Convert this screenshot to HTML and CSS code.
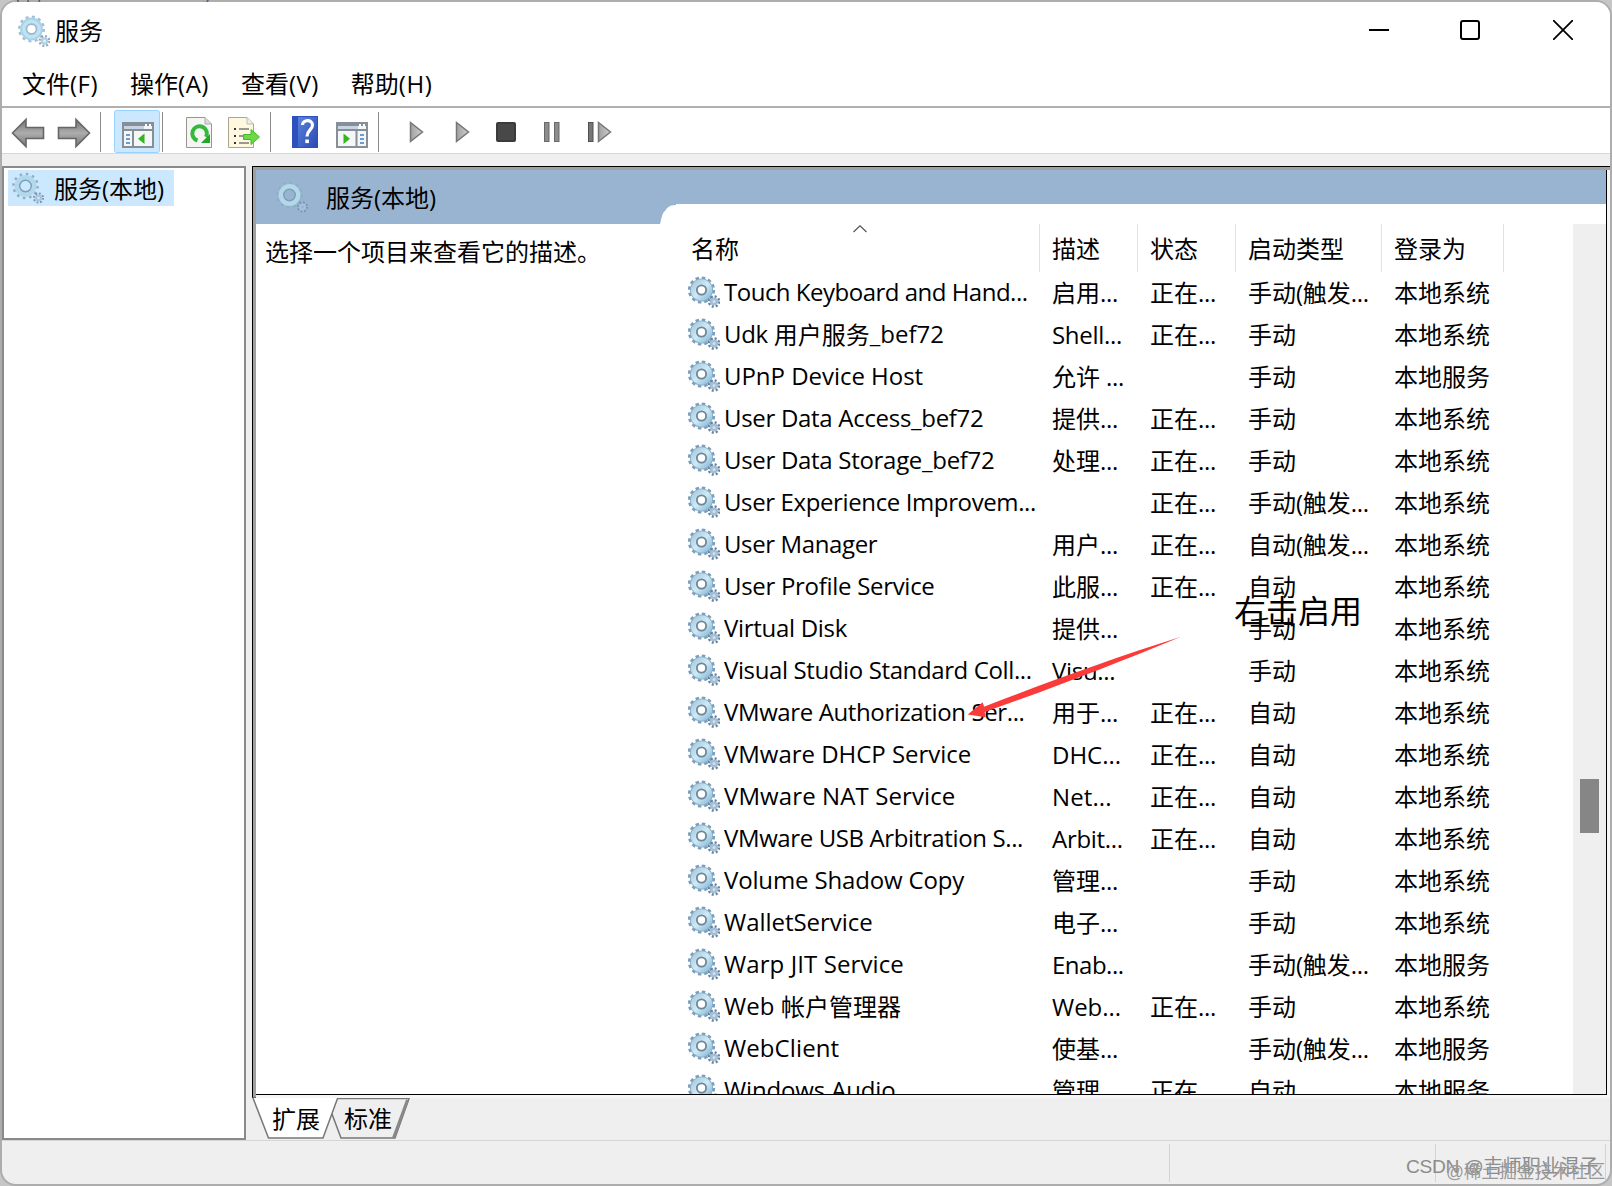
FILE: index.html
```html
<!DOCTYPE html>
<html lang="zh-CN">
<head>
<meta charset="utf-8">
<title>服务</title>
<link rel="stylesheet" href="styles.css">
</head>
<body>
<svg class="defs" width="0" height="0">
  <defs>
    <linearGradient id="ring" x1="0" y1="0" x2="1" y2="1"><stop offset="0" stop-color="#a9cce0"/><stop offset=".5" stop-color="#cfeaf5"/><stop offset="1" stop-color="#8fc0dc"/></linearGradient>
    <linearGradient id="metal" x1="0" y1="0" x2="0" y2="1"><stop offset="0" stop-color="#707070"/><stop offset=".5" stop-color="#adadad"/><stop offset="1" stop-color="#777"/></linearGradient>
    <linearGradient id="play" x1="0" y1="0" x2="1" y2="0"><stop offset="0" stop-color="#a0a0a0"/><stop offset="1" stop-color="#cfcfcf"/></linearGradient>
    <linearGradient id="book" x1="0" y1="0" x2="1" y2="1"><stop offset="0" stop-color="#5a83dd"/><stop offset="1" stop-color="#2a49b4"/></linearGradient>
    <symbol id="gear" viewBox="0 0 32 32">
      <circle cx="13.5" cy="14" r="12" fill="none" stroke="#7b9db9" stroke-width="3.2" stroke-dasharray="3.4 2.88"/>
      <circle cx="13.5" cy="14" r="8.2" fill="none" stroke="#86abc6" stroke-width="6.6"/>
      <circle cx="13.5" cy="14" r="8" fill="none" stroke="url(#ring)" stroke-width="5.4"/>
      <circle cx="13.5" cy="14" r="4.6" fill="#fff" stroke="#6f8799" stroke-width="1.8"/>
      <circle cx="26" cy="25.500" r="5" fill="none" stroke="#68829d" stroke-width="2.600" stroke-dasharray="2 1.930"/>
      <circle cx="26" cy="25.500" r="2.800" fill="#cfe0ee" stroke="#a3bfd6" stroke-width="2.600"/>
    </symbol>
    <symbol id="gear-title" viewBox="0 0 32 32">
      <circle cx="13.500" cy="14" r="12" fill="none" stroke="#a5c0d2" stroke-width="3" stroke-dasharray="3 3.280"/>
      <circle cx="13.500" cy="14" r="8.200" fill="none" stroke="#a9d3ea" stroke-width="6.400"/>
      <circle cx="13.500" cy="14" r="7.800" fill="none" stroke="#c1e2f2" stroke-width="3"/>
      <circle cx="13.500" cy="14" r="4.800" fill="#fff" stroke="#9fb6c6" stroke-width="1.400"/>
      <circle cx="26.500" cy="26" r="4.800" fill="none" stroke="#8fa9bd" stroke-width="2.400" stroke-dasharray="1.900 1.870"/>
      <circle cx="26.500" cy="26" r="2.600" fill="#e3eff6" stroke="#b2d0e2" stroke-width="2.200"/>
    </symbol>
    <symbol id="gear-soft" viewBox="0 0 32 32">
      <circle cx="13.500" cy="14" r="12" fill="none" stroke="#8fadc4" stroke-width="2.600" stroke-dasharray="2.500 3.780"/>
      <circle cx="13.500" cy="14" r="8.400" fill="none" stroke="#b3d8ea" stroke-width="5"/>
      <circle cx="13.500" cy="14" r="5.800" fill="none" stroke="#7d9eb8" stroke-width="1.400"/>
      <circle cx="26.500" cy="26" r="4.600" fill="none" stroke="#7a95ae" stroke-width="2" stroke-dasharray="1.800 1.810"/>
      <circle cx="26.500" cy="26" r="2.400" fill="none" stroke="#a7c3d8" stroke-width="2"/>
    </symbol>
  </defs>
</svg>
<div class="desktop">
<div class="window">
  <header class="titlebar">
    <svg class="gear-icon" width="32" height="32"><use href="#gear-title"/></svg>
    <h1 class="title">服务</h1>
    <div class="controls">
      <svg width="20" height="20"><path d="M0 10h20" stroke="#000" stroke-width="2"/></svg>
      <svg width="20" height="20"><rect x="1" y="1" width="18" height="18" rx="2" fill="none" stroke="#000" stroke-width="2"/></svg>
      <svg width="20" height="20"><path d="M0 0L20 20M20 0L0 20" stroke="#000" stroke-width="1.8"/></svg>
    </div>
  </header>
  <nav class="menu"><span>文件<i>(F)</i></span><span>操作<i>(A)</i></span><span>查看<i>(V)</i></span><span>帮助<i>(H)</i></span></nav>
  <div class="toolbar">
    <svg width="378" height="45" viewBox="2 108 378 45">
      <path d="M12.500 133L26 119.500V127.500H43.500V138.500H26V146.500Z" fill="url(#metal)" stroke="#666" stroke-width="1.600"/>
      <path d="M89.500 133L76 119.500V127.500H58.500V138.500H76V146.500Z" fill="url(#metal)" stroke="#666" stroke-width="1.600"/>
      <path d="M100.500 112V152M162.500 112V152M270.500 112V152M378.500 112V152" stroke="#8c8c8c"/>
      <rect x="114.500" y="110.500" width="45" height="42" rx="2" fill="#cce8ff" stroke="#99d1ff"/>
      <rect x="123" y="123" width="30" height="24" fill="#f4f6f8" stroke="#868e98" stroke-width="2"/>
      <path d="M122 125H154M122 130H154" stroke="#868e98" stroke-width="2"/><path d="M124 127.500H144" stroke="#c7d4e3" stroke-width="3"/><path d="M145 125h2M149 125h2" stroke="#fff" stroke-width="2"/>
      <path d="M133 131V146" stroke="#868e98" stroke-width="2"/><path d="M126 135h4M126 139h4M126 143h4" stroke="#3d80bd" stroke-width="1.600"/><path d="M144.500 133.500V144L138 138.800Z" fill="#32b51d"/>
      <path d="M186.500 117.500H205L211.500 124V147.500H186.500Z" fill="#f5f5f3" stroke="#96968e"/><path d="M205 117.500V124H211" fill="#ddd" stroke="#aaa"/>
      <path d="M197.500 140.500A7.300 7.300 0 1 1 206 137" fill="none" stroke="#35b83d" stroke-width="4"/><path d="M201 143L210 143V134Z" fill="#25a52c"/>
      <path d="M228.500 117.500H247L253.500 124V147.500H228.500Z" fill="#fdf8df" stroke="#a9a58f"/><path d="M247 117.500V124H253" fill="#eee" stroke="#bbb"/>
      <path d="M234 129h2M234 136h2M234 143h2" stroke="#333" stroke-width="2"/><path d="M239 129H249M239 136H246M239 143H249" stroke="#777" stroke-width="1.500"/>
      <path d="M243.500 134.500H251V129.500L259.500 137L251 144.500V139.500H243.500Z" fill="#6bd944" stroke="#44ba2c"/>
      <rect x="292" y="116" width="26" height="32" fill="#2e50bc"/><rect x="298" y="117" width="19" height="30" fill="url(#book)"/>
      <path d="M302.500 125C302.500 119.500 312.500 119 312.500 125C312.500 130 307 130 307 136.500" fill="none" stroke="#fff" stroke-width="3.200"/><rect x="305.300" y="139.500" width="3.600" height="3.600" fill="#fff"/>
      <rect x="337" y="123" width="30" height="24" fill="#f4f6f8" stroke="#868e98" stroke-width="2"/><path d="M336 125H368M336 130H368" stroke="#868e98" stroke-width="2"/><path d="M338 127.500H358" stroke="#c7d4e3" stroke-width="3"/><path d="M359 125h2M363 125h2" stroke="#fff" stroke-width="2"/>
      <path d="M356.500 131V146" stroke="#868e98" stroke-width="2"/><path d="M360 135h4M360 139h4M360 143h4" stroke="#3d80bd" stroke-width="1.600"/><path d="M343.500 133.500V144L350 138.800Z" fill="#32b51d"/>
    </svg>
    <svg class="run" width="204" height="24" viewBox="408 120 204 24">
      <path d="M410.500 122.500V141.500L422.500 132Z" fill="url(#play)" stroke="#777" stroke-width="1.500"/>
      <path d="M456.500 122.500V141.500L468.500 132Z" fill="url(#play)" stroke="#777" stroke-width="1.500"/>
      <rect x="497" y="123" width="18" height="18" rx="1" fill="#484848" stroke="#3b3b3b" stroke-width="2"/>
      <rect x="544.500" y="122.500" width="4.500" height="19" fill="#8c8c8c" stroke="#686868"/><rect x="554.500" y="122.500" width="4.500" height="19" fill="#8c8c8c" stroke="#686868"/>
      <rect x="588.500" y="122.500" width="4.500" height="19" fill="#777" stroke="#505050"/><path d="M598.500 122.500V141.500L610.500 132Z" fill="url(#play)" stroke="#777" stroke-width="1.500"/>
    </svg>
  </div>
  <main class="body">
    <aside class="tree"><div class="tree-item"><svg width="32" height="32"><use href="#gear-soft"/></svg><span>服务<i>(</i>本地<i>)</i></span></div></aside>
    <section class="pane">
      <div class="frame">
        <div class="content">
          <div class="info">
            <h2 class="band"><svg width="32" height="32"><use href="#gear-soft"/></svg><span>服务<i>(</i>本地<i>)</i></span></h2>
            <p class="hint">选择一个项目来查看它的描述。</p>
          </div>
          <div class="list">
            <div class="strip"></div>
            <div class="crest"><svg width="16" height="20"><path d="M0 0H16V1C9 1 7 4 5 7C2 9 2 13 0 20Z" fill="#99b4d1"/></svg></div>
            <div class="scroller">
              <div class="grid">
                <div class="row head"><span>名称<svg class="sort" width="14" height="8"><path d="M.5 7L7 .8L13.500 7" fill="none" stroke="#555" stroke-width="1.200"/></svg></span><span>描述</span><span>状态</span><span>启动类型</span><span>登录为</span></div>
                <div class="row"><b><svg><use href="#gear"/></svg><i class="tighter">Touch Keyboard and Hand...</i></b><span>启用<i>...</i></span><span>正在<i>...</i></span><span>手动<i>(</i>触发<i>...</i></span><span>本地系统</span></div>
                <div class="row"><b><svg><use href="#gear"/></svg><i>Udk </i>用户服务<i class="loose">_bef72</i></b><span><i>Shell...</i></span><span>正在<i>...</i></span><span>手动</span><span>本地系统</span></div>
                <div class="row"><b><svg><use href="#gear"/></svg><i class="loose">UPnP Device Host</i></b><span>允许<i> ...</i></span><span></span><span>手动</span><span>本地服务</span></div>
                <div class="row"><b><svg><use href="#gear"/></svg><i>User Data Access_bef72</i></b><span>提供<i>...</i></span><span>正在<i>...</i></span><span>手动</span><span>本地系统</span></div>
                <div class="row"><b><svg><use href="#gear"/></svg><i>User Data Storage_bef72</i></b><span>处理<i>...</i></span><span>正在<i>...</i></span><span>手动</span><span>本地系统</span></div>
                <div class="row"><b><svg><use href="#gear"/></svg><i class="tight">User Experience Improvem...</i></b><span></span><span>正在<i>...</i></span><span>手动<i>(</i>触发<i>...</i></span><span>本地系统</span></div>
                <div class="row"><b><svg><use href="#gear"/></svg><i class="tight">User Manager</i></b><span>用户<i>...</i></span><span>正在<i>...</i></span><span>自动<i>(</i>触发<i>...</i></span><span>本地系统</span></div>
                <div class="row"><b><svg><use href="#gear"/></svg><i>User Profile Service</i></b><span>此服<i>...</i></span><span>正在<i>...</i></span><span>自动</span><span>本地系统</span></div>
                <div class="row"><b><svg><use href="#gear"/></svg><i>Virtual Disk</i></b><span>提供<i>...</i></span><span></span><span>手动</span><span>本地系统</span></div>
                <div class="row"><b><svg><use href="#gear"/></svg><i class="tight">Visual Studio Standard Coll...</i></b><span><i>Visu...</i></span><span></span><span>手动</span><span>本地系统</span></div>
                <div class="row"><b><svg><use href="#gear"/></svg><i class="tight">VMware Authorization Ser...</i></b><span>用于<i>...</i></span><span>正在<i>...</i></span><span>自动</span><span>本地系统</span></div>
                <div class="row"><b><svg><use href="#gear"/></svg><i class="loose">VMware DHCP Service</i></b><span><i class="loose">DHC...</i></span><span>正在<i>...</i></span><span>自动</span><span>本地系统</span></div>
                <div class="row"><b><svg><use href="#gear"/></svg><i class="looser">VMware NAT Service</i></b><span><i class="looser">Net...</i></span><span>正在<i>...</i></span><span>自动</span><span>本地系统</span></div>
                <div class="row"><b><svg><use href="#gear"/></svg><i class="tight">VMware USB Arbitration S...</i></b><span><i>Arbit...</i></span><span>正在<i>...</i></span><span>自动</span><span>本地系统</span></div>
                <div class="row"><b><svg><use href="#gear"/></svg><i class="open">Volume Shadow Copy</i></b><span>管理<i>...</i></span><span></span><span>手动</span><span>本地系统</span></div>
                <div class="row"><b><svg><use href="#gear"/></svg><i class="loose">WalletService</i></b><span>电子<i>...</i></span><span></span><span>手动</span><span>本地系统</span></div>
                <div class="row"><b><svg><use href="#gear"/></svg><i class="looser">Warp JIT Service</i></b><span><i class="tighter">Enab...</i></span><span></span><span>手动<i>(</i>触发<i>...</i></span><span>本地服务</span></div>
                <div class="row"><b><svg><use href="#gear"/></svg><i class="looser">Web </i>帐户管理器</b><span><i class="loose">Web...</i></span><span>正在<i>...</i></span><span>手动</span><span>本地系统</span></div>
                <div class="row"><b><svg><use href="#gear"/></svg><i class="looser">WebClient</i></b><span>使基<i>...</i></span><span></span><span>手动<i>(</i>触发<i>...</i></span><span>本地服务</span></div>
                <div class="row"><b><svg><use href="#gear"/></svg><i class="open">Windows Audio</i></b><span>管理<i>...</i></span><span>正在<i>...</i></span><span>自动</span><span>本地服务</span></div>
              </div>
              <div class="scrollbar"><div class="thumb"></div></div>
            </div>
          </div>
        </div>
      </div>
      <div class="tabs">
        <svg class="tab-lines" width="160" height="42" viewBox="252 1098 160 42">
          <path d="M253 1098L268 1138H323L338 1098Z" fill="#fff"/>
          <path d="M253 1098L268.500 1138H323L337.500 1098.500H409L395 1138H341L332 1114" fill="none" stroke="#777" stroke-width="1.500"/>
          <path d="M407.500 1100L393.500 1138" stroke="#888" stroke-width="3"/>
        </svg>
        <span>扩展</span><span>标准</span>
      </div>
    </section>
  </main>
  <footer class="status"><span></span><span></span><span></span></footer>
</div>
<div class="behind">( [ [ SUIITUWEITUTU )</div>
<svg class="arrow" width="216" height="84" viewBox="966 635 216 84"><path d="M967.700 714.500L982.700 702.300L984 706.700C1040 685 1110 659 1181 636.700C1120 662 1050 689 984.700 712L985.500 717.300Z" fill="#fb3a3a"/></svg>
<div class="note">右击启用</div>
<div class="mark mark-a"><i>CSDN @</i>吉师职业混子</div>
<div class="mark mark-b"><i>@</i>稀土掘金技术社区</div>
</div>
</body>
</html>
```
FILE: styles.css
```css
* { box-sizing: border-box; }
body { margin: 0; font: 24px/42px "Noto Sans CJK SC", sans-serif; color: #000; }
i { font-style: normal; font-family: "Open Sans", "Noto Sans", sans-serif; letter-spacing: -0.3px; white-space: pre; }
.tight { letter-spacing: -0.38px; }
.tighter { letter-spacing: -0.5px; }
.open { letter-spacing: -0.15px; }
.loose { letter-spacing: -0.03px; }
.looser { letter-spacing: 0.1px; }
h1, h2, p { margin: 0; font-size: inherit; font-weight: 400; }
b { font-weight: 400; }
svg { display: block; flex: none; }
.defs { position: absolute; }
.desktop { position: relative; width: 1612px; height: 1186px; background: #c6c6c6; overflow: hidden; }
.behind { position: absolute; left: 14px; top: 0; width: 200px; height: 2px; overflow: hidden; font-size: 20px; line-height: 20px; text-indent: 0; color: #555; display: flex; align-items: flex-end; white-space: nowrap; padding-bottom: 0; }
.window { height: 1186px; border: 2px solid #adadad; border-radius: 16px; background: #efefef; overflow: hidden; display: flex; flex-direction: column; }
.titlebar { height: 60px; background: #fff; display: flex; align-items: center; padding: 0 37px 4px 16px; }
.gear-icon { margin-top: 2px; }
.title { margin-left: 5px; line-height: 40px; }
.controls { margin-left: auto; display: flex; gap: 71px; }
.controls svg:last-child { margin-left: 2px; }
.menu { height: 44px; background: #fff; display: flex; padding-left: 20px; gap: 32px; line-height: 42px; }
.menu i { letter-spacing: 0.5px; }
.toolbar { height: 48px; border-top: 2px solid #b0b0b0; border-bottom: 1px solid #d8d8d8; background: #fff; display: flex; }
.run { margin: 12px 0 0 28px; }
.body { height: 987px; padding-top: 12px; display: flex; border-bottom: 1px solid #d5d5d5; gap: 6px; }
.tree { width: 244px; border: 2px solid #8a8a8a; background: #fff; padding: 2px 4px; }
.tree-item { width: 166px; height: 36px; background: #cce8ff; display: flex; align-items: center; padding-left: 4px; gap: 10px; }
.tree-item span { line-height: 36px; }
.tree-item i, .band i { letter-spacing: 0; }
.pane { flex: 1; display: flex; flex-direction: column; }
.frame { height: 933px; background: #a0a0a0; border-top: 1px solid #000; border-left: 1px solid #000; border-bottom: 1px solid #666; padding: 3px 0 0 3px; }
.content { height: 925px; width: 1351px; display: flex; border-right: 1px solid #000; border-bottom: 1px solid #000; box-shadow: 0 3px 0 #f6f6f6, 3px 0 0 #f6f6f6, 3px 3px 0 #f6f6f6; background: #fff; }
.info { width: 404px; }
.band { height: 54px; background: #99b4d1; display: flex; align-items: center; padding-left: 20px; gap: 18px; }
.band span { padding-top: 1px; }
.hint { padding: 6px 0 0 9px; }
.list { flex: 1; display: flex; flex-direction: column; min-width: 0; }
.strip { height: 34px; background: #99b4d1; }
.crest { height: 20px; }
.scroller { display: flex; justify-content: space-between; height: 870px; overflow: hidden; }
.row { height: 42px; display: grid; grid-template-columns: 392px 98px 98px 146px 122px; white-space: nowrap; line-height: 39px; }
.row b { display: flex; align-items: center; padding-left: 28px; height: 39px; }
.row b svg { width: 32px; height: 32px; margin: 0 4px 0 0; }
.head { height: 48px; grid-template-columns: 380px 98px 98px 146px 122px; line-height: 47px; }
.head span { height: 48px; border-right: 1px solid #e2e2e2; padding-left: 12px; position: relative; }
.head span:first-child { padding-left: 31px; }
.sort { position: absolute; left: 193px; top: 1px; }
.scrollbar { width: 33px; background: #efefef; padding: 555px 7px 0; }
.thumb { width: 19px; height: 54px; background: #868686; }
.tabs { height: 42px; position: relative; display: flex; gap: 24px; padding-left: 20px; line-height: 39px; }
.tab-lines { position: absolute; left: 0; top: 0; }
.tabs span { position: relative; }
.status { flex: 1; display: flex; padding: 3px 4px 2px 0; }
.status span { border-right: 1px solid #d3d3d3; width: 1168px; }
.status span:nth-child(2) { width: 266px; }
.status span:nth-child(3) { width: 170px; }
.arrow { position: absolute; left: 966px; top: 635px; }
.note { position: absolute; left: 1234px; top: 585px; font-size: 32px; line-height: 48px; }
.mark { position: absolute; color: #8c8c8c; line-height: 30px; white-space: nowrap; }
.mark i { font-family: "Liberation Sans", sans-serif; }
.mark-a { left: 1406px; top: 1150px; font-size: 19.2px; }
.mark-b { left: 1446px; top: 1155px; font-size: 17.7px; color: #999; }
```
